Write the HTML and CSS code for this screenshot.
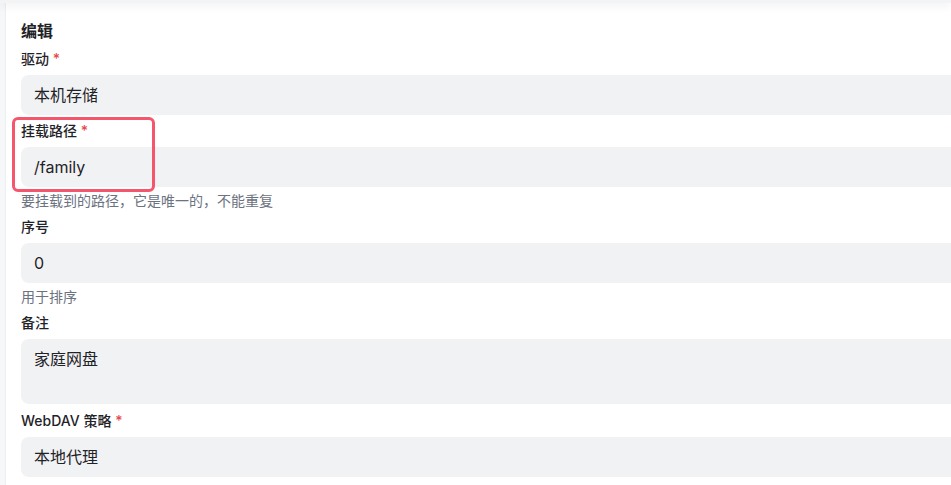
FILE: index.html
```html
<!DOCTYPE html>
<html lang="zh-CN">
<head>
    <meta charset="UTF-8">
    <meta name="viewport" content="width=device-width, initial-scale=1.0">
    <title>编辑</title>
    <link rel="stylesheet" href="styles.css">
</head>
<body>
    <div class="topbar"></div>
    <div class="card">
        <h2 class="title">编辑</h2>

        <div class="field">
            <label>驱动 <span class="req">*</span></label>
            <div class="input">本机存储</div>
        </div>

        <div class="field">
            <label>挂载路径 <span class="req">*</span></label>
            <div class="input">/family</div>
            <div class="help">要挂载到的路径，它是唯一的，不能重复</div>
            <div class="highlight"></div>
        </div>

        <div class="field">
            <label>序号</label>
            <div class="input">0</div>
            <div class="help">用于排序</div>
        </div>

        <div class="field field-wide">
            <label>备注</label>
            <div class="input textarea">家庭网盘</div>
        </div>

        <div class="field">
            <label>WebDAV 策略 <span class="req">*</span></label>
            <div class="input">本地代理</div>
        </div>
    </div>
</body>
</html>
```

FILE: styles.css
```css
body {
    margin: 0;
    background: #f6f7f8;
    font-family: Inter, "Noto Sans CJK SC", sans-serif;
    color: #1f2328;
    overflow: hidden;
}
.topbar {
    height: 3px;
    background: #f3f4f5;
    box-shadow: 0 2px 8px rgba(0,0,0,0.12);
    position: relative;
    z-index: 2;
}
.card {
    margin-left: 5px;
    background: white;
    border-left: 1px solid #eceef0;
    padding: 16px 0 40px 15px;
    min-height: 600px;
}
.title {
    margin: 0 0 6px;
    font-size: 16px;
    font-weight: 700;
    line-height: 24px;
}
.field {
    position: relative;
    display: flex;
    flex-direction: column;
    margin-bottom: 6px;
}
.field-wide {
    margin-bottom: 7px;
}
label {
    font-size: 14px;
    font-weight: 500;
    line-height: 20px;
    margin-bottom: 6px;
}
.req {
    color: #e5484d;
}
.input {
    width: 1000px;
    height: 40px;
    box-sizing: border-box;
    padding: 0 13px;
    background: #f1f2f4;
    border-radius: 8px;
    font-size: 16px;
    line-height: 40px;
}
.textarea {
    height: 65px;
    line-height: 24px;
    padding-top: 8px;
}
.help {
    margin-top: 4px;
    font-size: 14px;
    line-height: 20px;
    color: #6b7280;
}
.highlight {
    position: absolute;
    left: -9px;
    top: -4px;
    width: 143px;
    height: 75px;
    box-sizing: border-box;
    border: 3px solid #f5566c;
    border-radius: 6px;
}
```
